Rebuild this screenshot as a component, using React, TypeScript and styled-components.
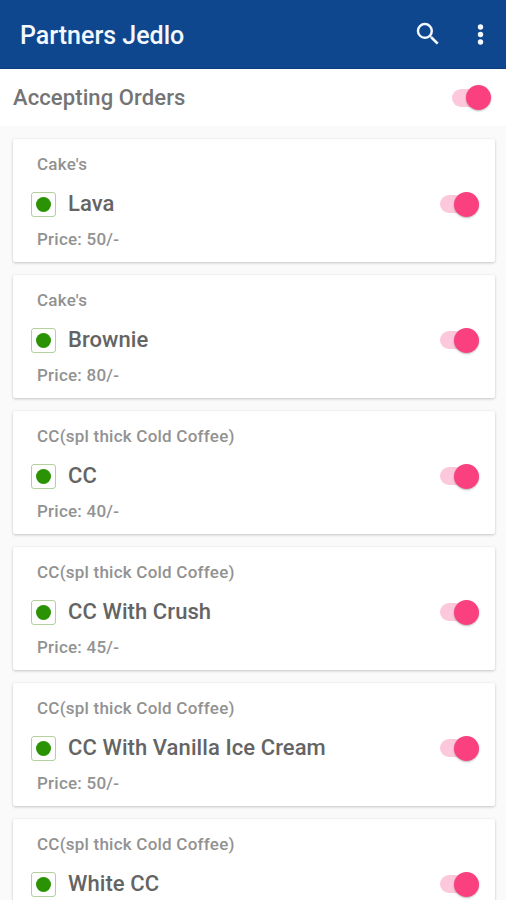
import React, { useState } from "react";
import styled, { createGlobalStyle } from "styled-components";

const GlobalStyle = createGlobalStyle`
  * { box-sizing: border-box; }
  body {
    margin: 0;
    background: #fafafa;
    font-family: Roboto, sans-serif;
    font-weight: 500;
  }
`;

const Screen = styled.div`
  width: 506px;
  height: 900px;
  overflow: hidden;
  display: flex;
  flex-direction: column;
  background: #fafafa;
`;

const AppBar = styled.header`
  flex: none;
  height: 69px;
  padding: 0 15px 0 20px;
  display: flex;
  align-items: center;
  background: #0f478f;
  border-bottom: 1px solid #0b3c7f;
  color: #f4f9ff;
`;

const AppTitle = styled.h1`
  flex: 1;
  margin: 4px 0 0;
  font-size: 25px;
  font-weight: 500;
  line-height: 30px;
`;

const BarButton = styled.button<{ $width: number }>`
  width: ${(p) => p.$width}px;
  height: 32px;
  padding: 0;
  border: 0;
  background: none;
  color: inherit;
  display: flex;
  align-items: center;
  justify-content: center;
`;

const StatusBar = styled.section`
  flex: none;
  height: 57px;
  padding: 0 15px 0 13px;
  display: flex;
  align-items: center;
  justify-content: space-between;
  background: #fff;
`;

const StatusLabel = styled.h2`
  margin: 0;
  font-size: 22px;
  font-weight: 500;
  line-height: 28px;
  letter-spacing: 0.1px;
  color: #747474;
`;

const List = styled.main`
  padding: 13px 11px 0 13px;
  display: flex;
  flex-direction: column;
  gap: 13px;
`;

const Card = styled.article`
  flex: none;
  height: 123px;
  padding: 14px 16px 0 18px;
  border-radius: 2px;
  background: #fff;
  box-shadow: 0 1px 3px rgba(0, 0, 0, 0.2), 0 0 2px rgba(0, 0, 0, 0.05);
`;

const Caption = styled.p`
  margin: 0;
  padding-left: 6px;
  font-size: 17px;
  line-height: 22px;
  letter-spacing: 0.23px;
  color: #929292;
`;

const ItemRow = styled.div`
  height: 53px;
  padding-top: 5px;
  display: flex;
  align-items: center;
`;

const VegMark = styled.span`
  width: 25px;
  height: 25px;
  border: 1px solid #b5cfa0;
  border-radius: 3px;
  display: flex;
  align-items: center;
  justify-content: center;

  &::before {
    content: "";
    width: 15px;
    height: 15px;
    border-radius: 50%;
    background: #2b9203;
  }
`;

const ItemName = styled.h3`
  flex: 1;
  margin: 0 0 0 12px;
  font-size: 22px;
  font-weight: 500;
  line-height: 28px;
  letter-spacing: 0.08px;
  color: #646464;
`;

const Track = styled.button<{ $on: boolean }>`
  width: 39px;
  height: 26px;
  padding: 0;
  border: 0;
  display: flex;
  align-items: center;
  justify-content: ${(p) => (p.$on ? "flex-end" : "flex-start")};
  background: none;
  isolation: isolate;
  position: relative;

  &::before {
    content: "";
    position: absolute;
    z-index: -1;
    inset: 4px 4px 4px 0;
    border-radius: 9px;
    background: ${(p) => (p.$on ? "#fdc8dc" : "#cccccc")};
  }
`;

const Thumb = styled.span<{ $on: boolean }>`
  width: 25px;
  height: 25px;
  border-radius: 50%;
  background: ${(p) => (p.$on ? "#fb4080" : "#f1f1f1")};
  box-shadow: 0 1px 2px rgba(0, 0, 0, 0.28);
`;

function Toggle({ label }: { label: string }) {
  const [on, setOn] = useState(true);
  return (
    <Track $on={on} role="switch" aria-checked={on} aria-label={label} onClick={() => setOn(!on)}>
      <Thumb $on={on} />
    </Track>
  );
}

interface Item {
  category: string;
  name: string;
  price?: number;
}

const items: Item[] = [
  { category: "Cake's", name: "Lava", price: 50 },
  { category: "Cake's", name: "Brownie", price: 80 },
  { category: "CC(spl thick Cold Coffee)", name: "CC", price: 40 },
  { category: "CC(spl thick Cold Coffee)", name: "CC With Crush", price: 45 },
  { category: "CC(spl thick Cold Coffee)", name: "CC With Vanilla Ice Cream", price: 50 },
  { category: "CC(spl thick Cold Coffee)", name: "White CC" },
];

export default function App() {
  return (
    <Screen>
      <GlobalStyle />
      <AppBar>
        <AppTitle>Partners Jedlo</AppTitle>
        <BarButton $width={82} aria-label="Search">
          <svg width="30" height="30" viewBox="0 0 24 24" fill="currentColor">
            <path d="M15.5 14h-.79l-.28-.27A6.47 6.47 0 0 0 16 9.5 6.5 6.5 0 1 0 9.5 16c1.61 0 3.09-.59 4.23-1.57l.27.28v.79l5 4.99L20.49 19l-4.99-5zm-6 0C7.01 14 5 11.99 5 9.5S7.01 5 9.5 5 14 7.01 14 9.5 11.99 14 9.5 14z" />
          </svg>
        </BarButton>
        <BarButton $width={22} aria-label="More options">
          <svg width="22" height="30" viewBox="0 0 22 30" fill="currentColor">
            <circle cx="11.5" cy="8" r="2.7" />
            <circle cx="11.5" cy="15.5" r="2.7" />
            <circle cx="11.5" cy="23" r="2.7" />
          </svg>
        </BarButton>
      </AppBar>
      <StatusBar>
        <StatusLabel>Accepting Orders</StatusLabel>
        <Toggle label="Accepting Orders" />
      </StatusBar>
      <List>
        {items.map((item) => (
          <Card key={item.name}>
            <Caption>{item.category}</Caption>
            <ItemRow>
              <VegMark />
              <ItemName>{item.name}</ItemName>
              <Toggle label={item.name} />
            </ItemRow>
            {item.price !== undefined && <Caption>Price: {item.price}/-</Caption>}
          </Card>
        ))}
      </List>
    </Screen>
  );
}
